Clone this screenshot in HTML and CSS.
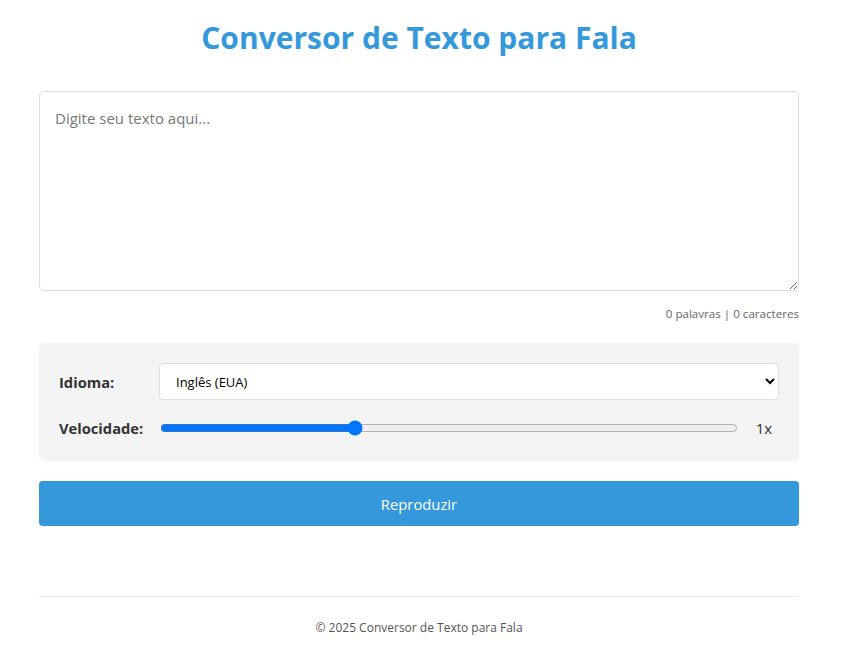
FILE: index.html
```html
<!DOCTYPE html>
<html lang="pt-BR">
<head>
<meta charset="utf-8">
<title>Conversor de Texto para Fala</title>
<link rel="stylesheet" href="styles.css">
</head>
<body>
<div class="container">
  <h1 class="title">Conversor de Texto para Fala</h1>
  <textarea class="text-input" placeholder="Digite seu texto aqui..."></textarea>
  <div class="counter">0 palavras | 0 caracteres</div>
  <div class="controls">
    <div class="row">
      <label class="label" for="lang">Idioma:</label>
      <select id="lang" class="select">
        <option>Inglês (EUA)</option>
        <option>Português (Brasil)</option>
      </select>
    </div>
    <div class="row">
      <label class="label" for="rate">Velocidade:</label>
      <input id="rate" class="range" type="range" min="0.5" max="2" step="0.1" value="1">
      <span class="rate-value">1x</span>
    </div>
  </div>
  <button class="play">Reproduzir</button>
  <footer class="footer">© 2025 Conversor de Texto para Fala</footer>
</div>
</body>
</html>
```
FILE: styles.css
```css
html, body {
  margin: 0;
  padding: 0;
  background: #fff;
}
body {
  font-family: "Open Sans", "Noto Sans", sans-serif;
  color: #333;
}
.container {
  width: 760px;
  margin-left: 39px;
  padding-top: 20px;
  display: flex;
  flex-direction: column;
}
.title {
  margin: 0 0 35px;
  text-align: center;
  color: #3498db;
  font-size: 30px;
  line-height: 36px;
  font-weight: 700;
}
.text-input {
  box-sizing: border-box;
  width: 100%;
  height: 200px;
  padding: 15px;
  border: 1px solid #ddd;
  border-radius: 5px;
  font-family: inherit;
  font-size: 15px;
  line-height: 22px;
  color: #333;
  resize: vertical;
  margin: 0;
}
.text-input::placeholder {
  color: #777;
}
.counter {
  margin-top: 14px;
  text-align: right;
  font-size: 11.6px;
  line-height: 18px;
  color: #666;
}
.controls {
  margin-top: 20px;
  background: #f4f4f4;
  border-radius: 5px;
  padding: 20px;
  display: flex;
  flex-direction: column;
  gap: 15px;
}
.row {
  display: flex;
  align-items: center;
}
.label {
  width: 100px;
  flex: none;
  font-weight: 700;
  font-size: 14.7px;
  color: #333;
}
.select {
  flex: 1;
  height: 37px;
  padding: 0 12px;
  border: 1px solid #ddd;
  border-radius: 4px;
  background: #fff;
  font-family: inherit;
  font-size: 13px;
  color: #000;
}
.range {
  flex: 1;
  margin: 0 0 0 1px;
  height: 26px;
}
.rate-value {
  width: 30px;
  margin-left: 11px;
  text-align: center;
  font-size: 15px;
  color: #333;
}
.play {
  margin-top: 20px;
  height: 45px;
  border: none;
  border-radius: 4px;
  background: #3498db;
  color: #fff;
  font-family: inherit;
  font-size: 14.8px;
  cursor: pointer;
}
.footer {
  margin-top: 70px;
  border-top: 1px solid #eee;
  padding-top: 21px;
  text-align: center;
  font-size: 12px;
  line-height: 20px;
  color: #555;
}
```
